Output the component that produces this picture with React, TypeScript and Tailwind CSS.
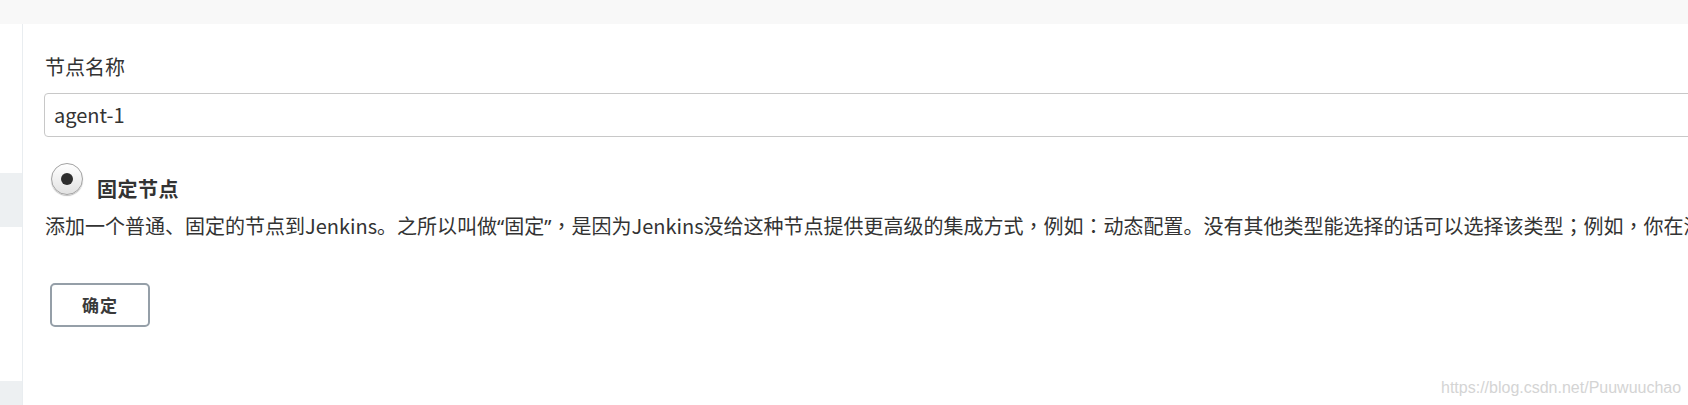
import React from "react";

function Rich({ text }: { text: string }) {
  const parts: React.ReactNode[] = [];
  let buf = "";
  const flush = (k: number) => {
    if (buf) {
      parts.push(<span key={"t" + k}>{buf}</span>);
      buf = "";
    }
  };
  Array.from(text).forEach((ch, i) => {
    if (ch === "“" || ch === "”") {
      flush(i);
      parts.push(
        <span key={i} style={{ fontFamily: '"Noto Sans", sans-serif' }}>
          {ch}
        </span>
      );
    } else if (ch === "，" || ch === "：" || ch === "；") {
      flush(i);
      parts.push(
        <span key={i} style={{ fontFamily: '"Noto Sans CJK TC", sans-serif' }}>
          {ch}
        </span>
      );
    } else {
      buf += ch;
    }
  });
  flush(99999);
  return <>{parts}</>;
}

export default function App() {
  const font = { fontFamily: '"Noto Sans CJK SC", "Noto Sans", sans-serif' };
  return (
    <div className="relative h-[405px] w-full overflow-hidden bg-white text-[#333]" style={font}>
      <div className="h-[24px] bg-[#f8f8f8]" />
      <div className="flex h-[381px]">
        <div className="w-[23px] shrink-0 border-r border-[#e9edf0] bg-white">
          <div className="mt-[149px] h-[54px] bg-[#edf0f2]" />
          <div className="mt-[154px] h-[24px] bg-[#edf0f2]" />
        </div>
        <div className="min-w-0 flex-1 overflow-hidden pl-[21px] pt-[29px]">
          <div className="pl-[1px] text-[20px] leading-[28px]">节点名称</div>
          <div className="mt-[12px] flex h-[44px] w-[1720px] items-center rounded-[4px] border border-[#c8c8c8] px-[9px] text-[20px]">
            agent-1
          </div>
          <div className="mt-[26px] flex items-start">
            <div className="ml-[7px] flex h-[32px] w-[32px] items-center justify-center rounded-full border-[1.5px] border-[#a3a3a3] bg-gradient-to-b from-white to-[#e2e2e2] shadow-[0_1px_1px_rgba(0,0,0,0.25)]">
              <div className="h-[12px] w-[12px] rounded-full bg-[#2e2e2e]" />
            </div>
            <span className="ml-[14px] mt-[12px] text-[20px] font-bold leading-[28px] tracking-[0.5px]">固定节点</span>
          </div>
          <div className="mt-[9px] whitespace-nowrap pl-[1px] text-[20px] leading-[28px]">
            <Rich text="添加一个普通、固定的节点到Jenkins。之所以叫做“固定”，是因为Jenkins没给这种节点提供更高级的集成方式，例如：动态配置。没有其他类型能选择的话可以选择该类型；例如，你在添加一个物理机、虚拟机或者其他的机器。" />
          </div>
          <button className="ml-[6px] mt-[42px] flex h-[44px] w-[100px] items-center justify-center rounded-[5px] border-2 border-[#959fa8] bg-white text-[17px] font-bold tracking-[1px] text-[#3a3a3a]">
            确定
          </button>
        </div>
      </div>
      <div
        className="absolute left-[1441px] top-[376px] whitespace-nowrap text-[16px] text-[#d4d4d4]"
        style={{ fontFamily: '"Liberation Sans", Arial, sans-serif' }}
      >
        https://blog.csdn.net/Puuwuuchao
      </div>
    </div>
  );
}
